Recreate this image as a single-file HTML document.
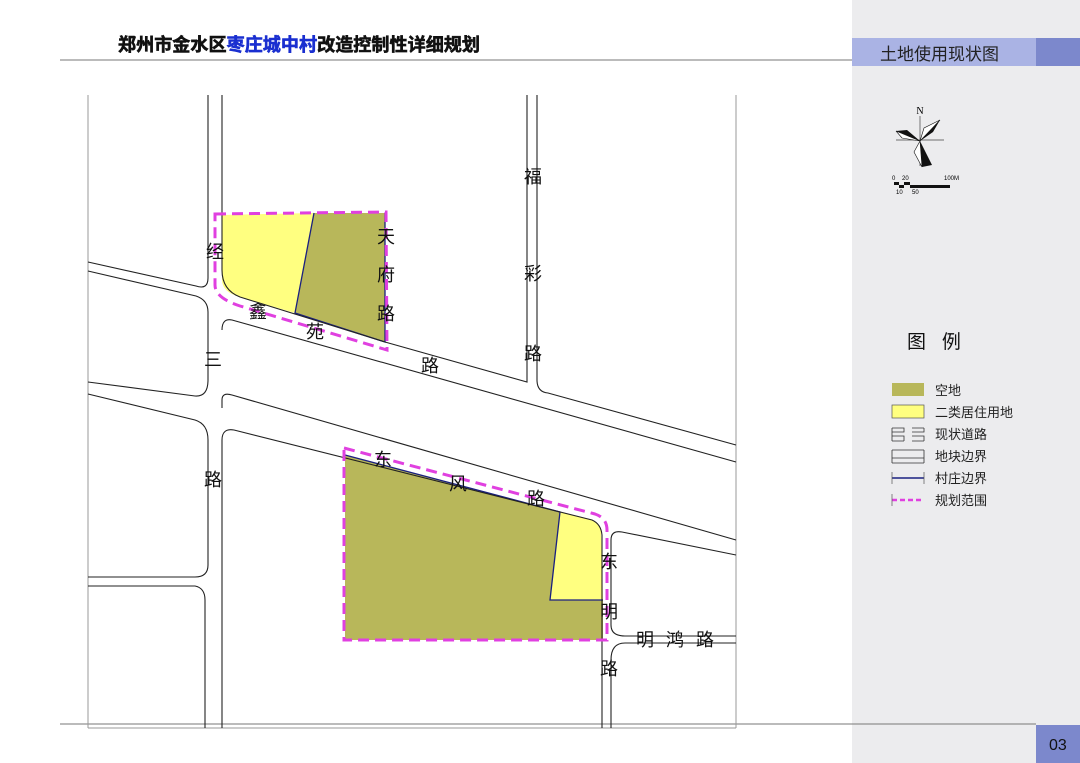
<!DOCTYPE html>
<html><head><meta charset="utf-8"><style>
body{margin:0;width:1080px;height:763px;overflow:hidden;background:#fff;font-family:"Liberation Sans","Noto Sans CJK SC",sans-serif;position:relative}
</style></head><body>
<svg width="1080" height="763" style="position:absolute;left:0;top:0" font-family="Liberation Sans, Noto Sans CJK SC, sans-serif">
<rect x="852" y="0" width="228" height="763" fill="#ececee"/>
<rect x="852" y="38" width="184" height="28" fill="#aab3e4"/>
<rect x="1036" y="38" width="44" height="28" fill="#7c88cc"/>
<rect x="1036" y="725" width="44" height="38" fill="#7c88cc"/>
<line x1="60" y1="60" x2="852" y2="60" stroke="#777" stroke-width="1"/>
<line x1="60" y1="724" x2="1036" y2="724" stroke="#777" stroke-width="1"/>
<text x="118" y="51" font-size="18" font-weight="bold" fill="#111" stroke="#111" stroke-width="0.6" textLength="362" lengthAdjust="spacingAndGlyphs">郑州市金水区<tspan fill="#1a2fd0" stroke="#1a2fd0">枣庄城中村</tspan>改造控制性详细规划</text>
<text x="880" y="60" font-size="17" fill="#222">土地使用现状图</text>
<text x="1049" y="750" font-size="16" fill="#111">03</text>
<g fill="none" stroke="#999" stroke-width="1">
<line x1="88" y1="95" x2="88" y2="728"/><line x1="736" y1="95" x2="736" y2="728"/><line x1="88" y1="728" x2="736" y2="728"/>
</g>
<path d="M222 215 L314 213 L295 313 L240 297 Q222 292 222 280 Z" fill="#ffff80"/>
<path d="M314 213 L385 213 L385 342 L295 313 Z" fill="#b8b75a"/>
<path d="M345 455 L560 512 L550 600 L603 600 L603 640 L345 640 Z" fill="#b8b75a"/>
<path d="M560 512 L592 520 Q600 524 601 532 L603 600 L550 600 Z" fill="#ffff80"/>
<g fill="none" stroke="#1a2080" stroke-width="1.3">
<path d="M314 213 L295 313 L385 342 L385 213"/>
<path d="M345 455 L560 512 L550 600 L603 600"/>
</g>
<g fill="none" stroke="#222" stroke-width="1.1">
<path d="M208 95 V278 Q208 290 196 286 L88 262"/>
<path d="M222 95 V270 Q222 290 240 297 L385 342"/>
<path d="M88 271 L196 296 Q208 300 208 312 V380 Q208 397 195 396 L88 382"/>
<path d="M222 330 Q222 318 232 320 L736 462"/>
<path d="M385 342 L527 382 V95"/>
<path d="M537 95 V380 Q537 392 548 393 L736 445"/>
<path d="M88 394 L195 420 Q208 424 208 440 V565 Q208 577 195 577 L88 577"/>
<path d="M88 586 L195 586 Q205 588 205 600 V728"/>
<path d="M222 728 V440 Q222 428 234 430 L592 520 Q601 524 602 535 V728"/>
<path d="M222 408 V400 Q222 392 232 395 L736 540"/>
<path d="M611 728 V660 Q611 643 625 643 H736"/>
<path d="M736 636 H625 Q611 636 611 625 V540 Q611 530 622 532 L736 555"/>
</g>
<g fill="none" stroke="#e040e0" stroke-width="3" stroke-dasharray="11,6">
<path d="M215 214 L386 212 L387 350 L240 306 Q215 298 215 285 Z"/>
<path d="M344 448 L595 514 Q607 518 607 530 L607 640 L344 640 Z"/>
</g>
<g font-size="18" fill="#111" text-anchor="middle">
<text x="215" y="258">经</text><text x="258" y="318">鑫</text><text x="315" y="338">苑</text><text x="430" y="372">路</text>
<text x="213" y="366">三</text><text x="213" y="486">路</text>
<text x="386" y="243">天</text><text x="386" y="281">府</text><text x="386" y="320">路</text>
<text x="533" y="183">福</text><text x="533" y="280">彩</text><text x="533" y="360">路</text>
<text x="383" y="466">东</text><text x="458" y="490">风</text><text x="536" y="505">路</text>
<text x="609" y="568">东</text><text x="609" y="618">明</text><text x="609" y="675">路</text>
<text x="645" y="646">明</text><text x="675" y="646">鸿</text><text x="705" y="646">路</text>
</g>
<g>
<text x="920" y="114" font-size="10" font-family="Liberation Serif, serif" text-anchor="middle">N</text>
<line x1="920" y1="116" x2="920" y2="166" stroke="#444" stroke-width="0.7"/>
<line x1="896" y1="140" x2="944" y2="140" stroke="#444" stroke-width="0.7"/>
<path d="M920 141 L896 131 L907 130 Z" fill="#111"/><path d="M920 141 L896 131 L902 138Z" fill="#fff" stroke="#111" stroke-width="0.6"/>
<path d="M920 141 L940 120 L933 132 Z" fill="#111"/><path d="M920 141 L940 120 L924 128Z" fill="#fff" stroke="#111" stroke-width="0.6"/>
<path d="M920 141 L922 167 L932 165 Z" fill="#111"/><path d="M920 141 L922 167 L914 152Z" fill="#fff" stroke="#111" stroke-width="0.6"/>
<text x="892" y="180" font-size="6">0</text><text x="902" y="180" font-size="6">20</text><text x="944" y="180" font-size="6">100M</text>
<rect x="894" y="182" width="5" height="3" fill="#111"/><rect x="899" y="185" width="5" height="3" fill="#111"/><rect x="904" y="182" width="6" height="3" fill="#111"/><rect x="910" y="185" width="40" height="3" fill="#111"/>
<text x="896" y="194" font-size="6">10</text><text x="912" y="194" font-size="6">50</text>
</g>
<text x="907" y="348" font-size="19" fill="#111">图 &#160; 例</text>
<g font-size="13" fill="#222">
<rect x="892" y="383" width="32" height="13" fill="#b8b75a"/><text x="935" y="395">空地</text>
<rect x="892" y="405" width="32" height="13" fill="#ffff80" stroke="#555" stroke-width="0.7"/><text x="935" y="417">二类居住用地</text>
<g fill="none" stroke="#333" stroke-width="0.8"><path d="M892 428 H904 V432 H892 M912 428 H924 M912 432 H924 V428 M892 436 H904 V441 M912 436 H924 V441 M892 441 H904 M912 441 H924 M892 428 V441"/></g><text x="935" y="439">现状道路</text>
<g fill="none" stroke="#333" stroke-width="0.8"><path d="M892 450 H924 M892 458 H924 M892 450 V463 M924 450 V463 M892 463 H924"/></g><text x="935" y="461">地块边界</text>
<path d="M892 478 H924" stroke="#1a2080" stroke-width="1.5"/><path d="M892 472 V484 M924 472 V484" stroke="#555" stroke-width="0.7"/><text x="935" y="483">村庄边界</text>
<path d="M892 500 H924" stroke="#e040e0" stroke-width="2.5" stroke-dasharray="5,3"/><path d="M892 494 V506" stroke="#555" stroke-width="0.7"/><text x="935" y="505">规划范围</text>
</g>
</svg>
</body></html>
